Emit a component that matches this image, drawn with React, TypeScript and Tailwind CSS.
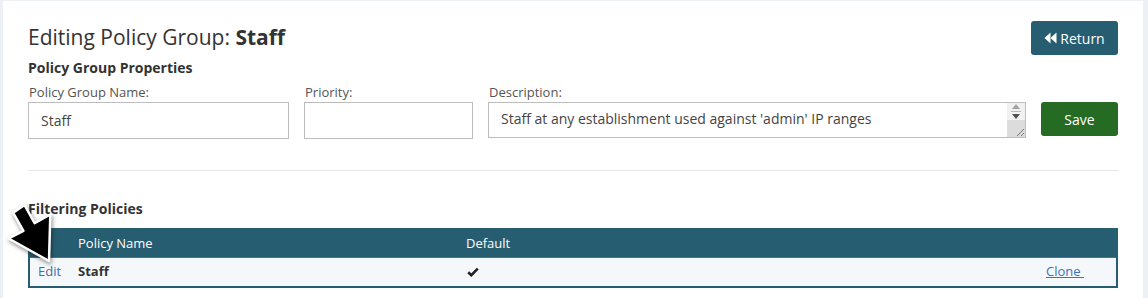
import React from "react";

const font = { fontFamily: "'Open Sans', 'Noto Sans', sans-serif" };

function BackwardIcon() {
  return (
    <svg width="13" height="12" viewBox="0 0 13 12" className="mr-[3px]">
      <polygon points="6.5,0.5 0.5,6 6.5,11.5" fill="white" />
      <polygon points="12.5,0.5 6.5,6 12.5,11.5" fill="white" />
    </svg>
  );
}

function Arrow() {
  return (
    <svg
      className="absolute left-0 top-[195px] pointer-events-none"
      width="75"
      height="80"
      viewBox="0 195 75 80"
      style={{ filter: "drop-shadow(1px 2px 2px rgba(0,0,0,0.45))" }}
    >
      <polygon
        points="24.5,205 34.6,223.2 50.3,214.5 49,261 8.7,238.5 23.4,230.8 13.2,212.8"
        fill="#000"
        stroke="#fff"
        strokeWidth="2.5"
        strokeLinejoin="round"
      />
    </svg>
  );
}

export default function App() {
  return (
    <div className="relative w-[1148px] h-[298px] bg-[#edf0f5] overflow-hidden" style={font}>
      <div className="ml-[3px] mt-[1px] w-[1140px] h-[297px] bg-white pl-[25px] pr-[25px] pt-[20px]">
        <div className="flex justify-between items-start">
          <h1 className="text-[21px] leading-[30px] text-[#333] mt-[1px]">
            Editing Policy Group: <span className="font-bold">Staff</span>
          </h1>
          <button className="h-[34px] w-[87px] rounded-[3px] bg-[#275d71] text-white text-[14px] flex items-center justify-center">
            <BackwardIcon />
            Return
          </button>
        </div>
        <div className="mt-[3px] text-[14px] leading-[20px] font-bold text-[#333]">
          Policy Group Properties
        </div>
        <div className="flex items-start mt-[4px]">
          <div className="flex flex-col">
            <label className="text-[13px] leading-[20px] text-[#555] pl-[1px]">Policy Group Name:</label>
            <div className="w-[261px] h-[37px] border border-[#bdbdbd] flex items-center pl-[12px] text-[14px] text-[#444]">
              Staff
            </div>
          </div>
          <div className="flex flex-col ml-[15px]">
            <label className="text-[13px] leading-[20px] text-[#555] pl-[1px]">Priority:</label>
            <div className="w-[169px] h-[37px] border border-[#bdbdbd]" />
          </div>
          <div className="flex flex-col ml-[15px]">
            <label className="text-[13px] leading-[20px] text-[#555] pl-[1px]">Description:</label>
            <div className="w-[538px] h-[36px] border border-[#bdbdbd] flex text-[14px] text-[#444]">
              <div className="flex-1 pl-[12px] pt-[6px] leading-[20px]">
                Staff at any establishment used against 'admin' IP ranges
              </div>
              <div className="w-[18px] flex flex-col">
                <div className="h-[17px] bg-[#f1f1f1] flex flex-col items-center justify-center gap-[2px]">
                  <svg width="8" height="5" viewBox="0 0 8 5"><polygon points="4,0 8,5 0,5" fill="#a3a3a3" /></svg>
                  <div className="w-[10px] h-[1px] bg-[#bbb]" />
                  <svg width="8" height="5" viewBox="0 0 8 5"><polygon points="0,0 8,0 4,5" fill="#505050" /></svg>
                </div>
                <div className="flex-1 bg-[#dcdcdc] flex items-end justify-end">
                  <svg width="10" height="10" viewBox="0 0 10 10">
                    <line x1="9" y1="2" x2="2" y2="9" stroke="#777" strokeWidth="1" />
                    <line x1="9" y1="6" x2="6" y2="9" stroke="#777" strokeWidth="1" />
                  </svg>
                </div>
              </div>
            </div>
          </div>
          <button className="ml-[15px] mt-[20px] h-[34px] w-[77px] rounded-[3px] bg-[#266b23] text-white text-[14px]">
            Save
          </button>
        </div>
        <div className="mt-[31px] h-[1px] bg-[#e6e6e6]" />
        <div className="mt-[28px] text-[14px] leading-[20px] font-bold text-[#333]">Filtering Policies</div>
        <div className="mt-[9px] border-2 border-[#275d71]">
          <div className="flex h-[28px] items-center bg-[#275d71] text-white text-[13px] border-b border-[#5d6b72]">
            <div className="w-[48px]" />
            <div className="w-[388px]">Policy Name</div>
            <div className="flex-1">Default</div>
          </div>
          <div className="flex h-[28px] items-center bg-[#f5f8fb] text-[13px]">
            <div className="w-[48px] pl-[8px] text-[#3a6ea8]">Edit</div>
            <div className="w-[388px] font-bold text-[#333]">Staff</div>
            <div className="flex-1 text-[#222]">
              <svg width="12" height="10" viewBox="0 0 12 10" className="ml-[1px]">
                <polyline points="1.2,5.2 4.3,8.2 10.8,1.6" fill="none" stroke="#222" strokeWidth="2.6" />
              </svg>
            </div>
            <div className="w-[70px]">
              <span className="text-[#3d72c0] underline">Clone&nbsp;</span>
            </div>
          </div>
        </div>
      </div>
      <Arrow />
    </div>
  );
}
